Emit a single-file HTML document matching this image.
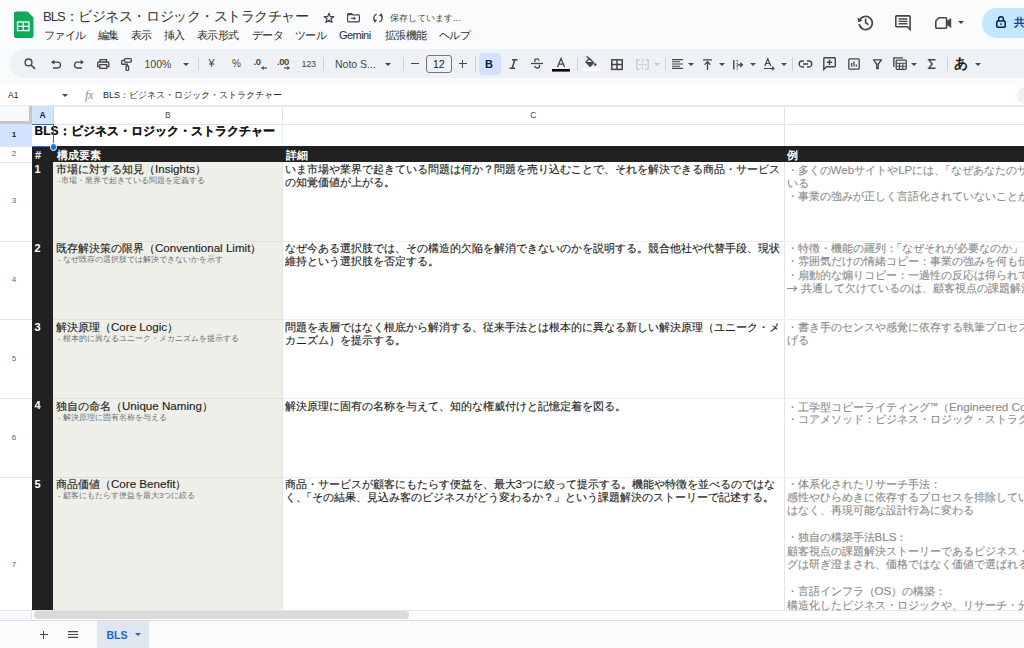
<!DOCTYPE html>
<html><head><meta charset="utf-8">
<style>
*{box-sizing:border-box;margin:0;padding:0}
html,body{width:1024px;height:648px;overflow:hidden}
body{position:relative;background:#f9fbfd;font-family:"Liberation Sans",sans-serif;color:#1f1f1f}
.a{position:absolute;white-space:nowrap}
svg{position:absolute;overflow:visible}
.ic{fill:none;stroke:#444746;stroke-width:1.5}
.menu{top:28.7px;font-size:11px;line-height:12px;color:#2a2a2a;letter-spacing:-0.55px}
.tb{font-size:10.5px;line-height:12px;color:#444746}
.sep{position:absolute;top:56.5px;width:1px;height:14px;background:#cdd0d5}
.rh{position:absolute;left:-2px;width:32px;font-size:8px;line-height:10px;text-align:center;color:#5f6368}
.hl{position:absolute;height:1px;background:#e2e2e2}
.vl{position:absolute;width:1px;background:#e2e2e2}
.t{position:absolute;white-space:nowrap;font-size:11px;line-height:13px;color:#1f1f1f;-webkit-text-stroke:0.15px #1f1f1f}
.d{position:absolute;white-space:nowrap;font-size:11px;line-height:13px;color:#8b8b8b;-webkit-text-stroke:0.12px #8b8b8b}
.s{position:absolute;white-space:nowrap;font-size:8px;line-height:9px;color:#6f6f6f;margin-top:0px}
.L{font-size:11.6px;line-height:1px}
.n{position:absolute;left:34.5px;font-size:11px;line-height:14px;margin-top:-1.2px;font-weight:bold;color:#fff}
</style></head><body>

<!-- ===== title bar ===== -->
<svg style="left:14px;top:11px" width="20" height="27" viewBox="0 0 20 27">
 <path d="M2 0.5H13.5L19.5 6.5V25A2 2 0 0 1 17.5 27H2A2 2 0 0 1 0 25V2.5A2 2 0 0 1 2 0.5Z" fill="#0fa958"/>
 <rect x="3.5" y="11" width="11.5" height="8.6" fill="none" stroke="#fff" stroke-width="1.3"/>
 <path d="M3.5 15.3H15M9.25 11V19.6" stroke="#fff" stroke-width="1.3"/>
</svg>
<div class="a" style="left:43px;top:8px;font-size:14px;line-height:16px;color:#333;letter-spacing:-0.48px"><span style="letter-spacing:-0.9px;font-size:13px">BLS</span>：ビジネス・ロジック・ストラクチャー</div>

<!-- star -->
<svg style="left:322.5px;top:12px" width="12" height="11.5" viewBox="0 0 12 11.5">
 <path d="M6 1.2L7.3 4.6H10.9L8 6.8L9.1 10.4L6 8.2L2.9 10.4L4 6.8L1.1 4.6H4.7Z" fill="none" stroke="#444746" stroke-width="1.2" stroke-linejoin="round"/>
</svg>
<!-- folder -->
<svg style="left:347px;top:13px" width="13" height="9.5" viewBox="0 0 13 9.5">
 <path d="M1.4 0.7H4.6L5.8 1.9H11.6A0.8 0.8 0 0 1 12.4 2.7V8.1A0.8 0.8 0 0 1 11.6 8.9H1.4A0.8 0.8 0 0 1 0.6 8.1V1.5A0.8 0.8 0 0 1 1.4 0.7Z" fill="none" stroke="#444746" stroke-width="1.2"/>
 <path d="M0.8 1H4.6L5.6 2.2H0.8Z" fill="#444746"/>
 <path d="M4 5.3H7.6" stroke="#444746" stroke-width="1.2"/>
 <path d="M6.8 3.4L9 5.3L6.8 7.2Z" fill="#444746"/>
</svg>
<!-- sync -->
<svg style="left:372.5px;top:12.5px" width="10" height="10" viewBox="0 0 10 10">
 <path d="M3.6 1.2A4 4 0 0 0 2.6 8.4" fill="none" stroke="#444746" stroke-width="1.4"/>
 <path d="M6.4 8.8A4 4 0 0 0 7.4 1.6" fill="none" stroke="#444746" stroke-width="1.4"/>
 <path d="M0.3 6.6L4.2 6.9L1.6 9.9Z" fill="#444746"/>
 <path d="M9.7 3.4L5.8 3.1L8.4 0.1Z" fill="#444746"/>
</svg>
<div class="a" style="left:390px;top:13px;font-size:9px;line-height:11px;color:#444746">保存しています...</div>

<!-- menu -->
<div class="a menu" style="left:44px">ファイル</div>
<div class="a menu" style="left:98px">編集</div>
<div class="a menu" style="left:131px">表示</div>
<div class="a menu" style="left:164px">挿入</div>
<div class="a menu" style="left:197px">表示形式</div>
<div class="a menu" style="left:252px">データ</div>
<div class="a menu" style="left:295px">ツール</div>
<div class="a menu" style="left:339px">Gemini</div>
<div class="a menu" style="left:385px">拡張機能</div>
<div class="a menu" style="left:439px">ヘルプ</div>

<!-- right icons -->
<svg style="left:857px;top:14px" width="17" height="17" viewBox="0 0 17 17">
 <path d="M2.6 6.5A6.6 6.6 0 1 1 2.2 10" fill="none" stroke="#444746" stroke-width="1.7"/>
 <path d="M0.5 3.5L1.2 8.2L5.5 6.8Z" fill="#444746"/>
 <path d="M8.6 4.6V8.8L11.6 10.6" fill="none" stroke="#444746" stroke-width="1.6"/>
</svg>
<svg style="left:895px;top:15px" width="16" height="16" viewBox="0 0 16 16">
 <path d="M1.7 0.9H14.2A0.9 0.9 0 0 1 15.1 1.8V14.6L12.3 11.8H1.7A0.9 0.9 0 0 1 0.8 10.9V1.8A0.9 0.9 0 0 1 1.7 0.9Z" fill="none" stroke="#444746" stroke-width="1.6"/>
 <path d="M3.5 4H12.4M3.5 6.4H12.4M3.5 8.8H12.4" stroke="#444746" stroke-width="1.4"/>
</svg>
<svg style="left:935px;top:17px" width="17" height="12" viewBox="0 0 17 12">
 <path d="M4 0.8H10.6A1 1 0 0 1 11.6 1.8V10.2A1 1 0 0 1 10.6 11.2H1.8A1 1 0 0 1 0.8 10.2V4Z" fill="none" stroke="#444746" stroke-width="1.6"/>
 <path d="M11.6 4.3L16.2 1V11L11.6 7.7Z" fill="#444746"/>
</svg>
<svg style="left:958px;top:21px" width="6" height="3" viewBox="0 0 6 3"><path d="M0 0H6L3 3Z" fill="#444746"/></svg>
<div class="a" style="left:982px;top:7.5px;width:80px;height:30px;border-radius:15px;background:#c2e7ff"></div>
<svg style="left:996px;top:16px" width="10" height="12" viewBox="0 0 10 12">
 <rect x="0.8" y="5" width="8.4" height="6.2" rx="1" fill="none" stroke="#041e49" stroke-width="1.5"/>
 <path d="M2.6 5V3.2A2.4 2.4 0 0 1 7.4 3.2V5" fill="none" stroke="#041e49" stroke-width="1.5"/>
 <circle cx="5" cy="8.1" r="0.9" fill="#041e49"/>
</svg>
<div class="a" style="left:1014px;top:16px;font-size:11px;line-height:12px;color:#16408a;font-weight:bold">共有</div>

<!-- ===== toolbar ===== -->
<div class="a" style="left:10px;top:48.5px;width:1030px;height:29.5px;border-radius:15px;background:#eef2f7"></div>

<!-- search -->
<svg style="left:23.5px;top:57.5px" width="12" height="11" viewBox="0 0 12 11">
 <circle cx="4.5" cy="4.4" r="3.4" fill="none" stroke="#444746" stroke-width="1.4"/>
 <path d="M7 7L11 10.9" stroke="#444746" stroke-width="1.5"/>
</svg>
<!-- undo -->
<svg style="left:50.5px;top:60.2px" width="11" height="9" viewBox="0 0 11 9">
 <path d="M0 2.2L3.4 -0.2V4.6Z" fill="#444746"/>
 <path d="M3 2.2H6.6A2.9 2.9 0 0 1 6.6 8H2" fill="none" stroke="#444746" stroke-width="1.3"/>
</svg>
<!-- redo -->
<svg style="left:73.5px;top:60.2px" width="11" height="9" viewBox="0 0 11 9">
 <path d="M10 2.2L6.6 -0.2V4.6Z" fill="#444746"/>
 <path d="M7 2.2H3.4A2.9 2.9 0 0 0 3.4 8H8" fill="none" stroke="#444746" stroke-width="1.3"/>
</svg>
<!-- print -->
<svg style="left:96.5px;top:59px" width="12.5" height="10" viewBox="0 0 12.5 10">
 <path d="M3 3V0.65H9.5V3" fill="none" stroke="#444746" stroke-width="1.3"/>
 <path d="M2.8 7.6H0.65V4.3A1.3 1.3 0 0 1 1.95 3H10.55A1.3 1.3 0 0 1 11.85 4.3V7.6H9.7" fill="none" stroke="#444746" stroke-width="1.3"/>
 <rect x="2.8" y="5.6" width="6.9" height="3.75" fill="none" stroke="#444746" stroke-width="1.3"/>
</svg>
<!-- paint format -->
<svg style="left:120.5px;top:58px" width="11" height="13" viewBox="0 0 11 13">
 <rect x="3.5" y="0.65" width="6.8" height="3.5" rx="1" fill="none" stroke="#444746" stroke-width="1.3"/>
 <path d="M3.5 2.4H1.5A0.85 0.85 0 0 0 0.65 3.25V5.4A0.85 0.85 0 0 0 1.5 6.25H6.3V8" fill="none" stroke="#444746" stroke-width="1.3"/>
 <rect x="5" y="8" width="2.6" height="4.4" rx="0.7" fill="none" stroke="#444746" stroke-width="1.3"/>
</svg>
<div class="a tb" style="left:144.5px;top:58px;font-size:10.5px;color:#444746">100%</div>
<svg style="left:183px;top:62.5px" width="6" height="3" viewBox="0 0 6 3"><path d="M0 0H6L3 3Z" fill="#444746"/></svg>
<div class="sep" style="left:198px"></div>
<div class="a tb" style="left:208.5px;top:57px;font-size:11px;line-height:13px">¥</div>
<div class="a tb" style="left:232px;top:58px;font-size:10px">%</div>
<div class="a tb" style="left:253.5px;top:55.5px;font-size:9.5px;font-weight:bold;letter-spacing:-0.5px">.0</div>
<svg style="left:260.5px;top:66px" width="6" height="4" viewBox="0 0 6 4"><path d="M6 2H2" stroke="#444746" stroke-width="1.2"/><path d="M0 2L2.6 0V4Z" fill="#444746"/></svg>
<div class="a tb" style="left:277px;top:55.5px;font-size:9.5px;font-weight:bold;letter-spacing:-0.5px">.00</div>
<svg style="left:284px;top:66px" width="6" height="4" viewBox="0 0 6 4"><path d="M0 2H4" stroke="#444746" stroke-width="1.2"/><path d="M6 2L3.4 0V4Z" fill="#444746"/></svg>
<div class="a tb" style="left:301.5px;top:57.5px;font-size:9px;letter-spacing:-0.3px">123</div>
<div class="sep" style="left:323px"></div>
<div class="a tb" style="left:335px;top:57.5px;font-size:10.5px;color:#444746">Noto S...</div>
<svg style="left:385px;top:62.5px" width="6" height="3" viewBox="0 0 6 3"><path d="M0 0H6L3 3Z" fill="#444746"/></svg>
<div class="sep" style="left:402.5px"></div>
<div class="a" style="left:410.5px;top:63px;width:8px;height:1.4px;background:#444746"></div>
<div class="a" style="left:426px;top:54.5px;width:25.5px;height:18.5px;border:1px solid #747775;border-radius:3px;font-size:10.5px;line-height:16.5px;text-align:center;color:#1f1f1f">12</div>
<div class="a" style="left:458.5px;top:63px;width:8px;height:1.4px;background:#444746"></div>
<div class="a" style="left:461.8px;top:59.7px;width:1.4px;height:8px;background:#444746"></div>
<div class="sep" style="left:475px"></div>
<div class="a" style="left:479px;top:53px;width:21.5px;height:21.5px;border-radius:4px;background:#d3e3fd"></div>
<div class="a" style="left:485px;top:57.5px;font-size:11px;line-height:12px;font-weight:bold;color:#041e49">B</div>
<!-- italic -->
<svg style="left:509px;top:58.5px" width="9" height="10" viewBox="0 0 9 10">
 <path d="M3 0.8H8.5M0.5 9.2H6M5.8 0.8L3.2 9.2" fill="none" stroke="#444746" stroke-width="1.5"/>
</svg>
<!-- strikethrough -->
<svg style="left:531px;top:58px" width="12" height="11" viewBox="0 0 12 11">
 <path d="M0 5.5H12" stroke="#444746" stroke-width="1.3"/>
 <path d="M8.3 2.5C7.8 1.3 6.9 0.9 6 0.9C4.6 0.9 3.7 1.7 3.7 2.6C3.7 3.2 4 3.7 4.4 4" fill="none" stroke="#444746" stroke-width="1.3"/>
 <path d="M3.6 8C4 9.3 5 10 6.1 10C7.6 10 8.5 9.2 8.5 8.2C8.5 7.7 8.3 7.3 8 7" fill="none" stroke="#444746" stroke-width="1.3"/>
</svg>
<!-- text color -->
<svg style="left:552px;top:56.5px" width="18" height="15" viewBox="0 0 18 15">
 <path d="M5.5 10L9 1.5L12.5 10M6.7 7.2H11.3" fill="none" stroke="#444746" stroke-width="1.3"/>
 <rect x="0" y="12" width="18" height="2.6" fill="#000"/>
</svg>
<div class="sep" style="left:576.5px"></div>
<!-- fill color -->
<svg style="left:583px;top:55px" width="18" height="16" viewBox="0 0 18 16">
 <path d="M3.6 1.2L6.4 4" stroke="#444746" stroke-width="1.3"/>
 <path d="M6.5 3.6L10.6 7.7L7.1 11.2L3 7.1Z" fill="none" stroke="#444746" stroke-width="1.4" stroke-linejoin="round"/>
 <path d="M3 7.1H10.2L7.1 11.2Z" fill="#444746"/>
 <circle cx="12.2" cy="9.6" r="1.3" fill="#444746"/>
 <rect x="0" y="12.8" width="17.3" height="3.2" fill="#fff"/>
</svg>
<!-- borders -->
<svg style="left:610.5px;top:58.5px" width="12" height="11" viewBox="0 0 12 11">
 <rect x="0.8" y="0.8" width="10.4" height="9.6" fill="none" stroke="#444746" stroke-width="1.5"/>
 <path d="M6 0.8V10.4M0.8 5.6H11.2" stroke="#444746" stroke-width="1.5"/>
</svg>
<!-- merge (disabled) -->
<svg style="left:635.5px;top:58.5px" width="13" height="11" viewBox="0 0 13 11">
 <path d="M3.5 0.8H0.8V10.2H3.5M9.5 0.8H12.2V10.2H9.5M6.5 0.5V3M6.5 4.5V6.5M6.5 8V10.5M2.5 5.5H5M8 5.5H10.5" fill="none" stroke="#c4c7c5" stroke-width="1.2"/>
</svg>
<svg style="left:654px;top:62.5px" width="6" height="3" viewBox="0 0 6 3"><path d="M0 0H6L3 3Z" fill="#c4c7c5"/></svg>
<div class="sep" style="left:664.5px"></div>
<!-- align left -->
<svg style="left:671.5px;top:58.5px" width="11" height="11" viewBox="0 0 11 11">
 <path d="M0 0.6H11M0 2.8H8M0 5H11M0 7.2H8M0 9.4H11" stroke="#444746" stroke-width="1.1"/>
</svg>
<svg style="left:688px;top:62.5px" width="6" height="3" viewBox="0 0 6 3"><path d="M0 0H6L3 3Z" fill="#444746"/></svg>
<!-- valign top -->
<svg style="left:703px;top:58.5px" width="9" height="11" viewBox="0 0 9 11">
 <path d="M0 0.8H9M4.5 3V11M1.6 5.6L4.5 2.7L7.4 5.6" fill="none" stroke="#444746" stroke-width="1.3"/>
</svg>
<svg style="left:719px;top:62.5px" width="6" height="3" viewBox="0 0 6 3"><path d="M0 0H6L3 3Z" fill="#444746"/></svg>
<!-- wrap/overflow -->
<svg style="left:733px;top:59.5px" width="10" height="10" viewBox="0 0 10 10">
 <path d="M0.8 0V9.5" stroke="#444746" stroke-width="1.4"/>
 <path d="M4.2 0V9.5" stroke="#444746" stroke-width="1.1" stroke-dasharray="1.6 1.2"/>
 <path d="M4.5 4.8H9.3M7.2 2.6L9.4 4.8L7.2 7" fill="none" stroke="#444746" stroke-width="1.3"/>
</svg>
<svg style="left:749.5px;top:62.5px" width="6" height="3" viewBox="0 0 6 3"><path d="M0 0H6L3 3Z" fill="#444746"/></svg>
<!-- rotate -->
<svg style="left:764px;top:58px" width="11" height="12" viewBox="0 0 11 12">
 <path d="M0.8 8L3.8 0.8L6.8 8M1.9 5.5H5.7M0 10.5H10M8 8.8L10 10.5L8 12" fill="none" stroke="#444746" stroke-width="1.2"/>
</svg>
<svg style="left:780.5px;top:62.5px" width="6" height="3" viewBox="0 0 6 3"><path d="M0 0H6L3 3Z" fill="#444746"/></svg>
<div class="sep" style="left:791.5px"></div>
<!-- link -->
<svg style="left:799px;top:59.5px" width="13" height="8" viewBox="0 0 13 8">
 <path d="M5 1H3.2A3 3 0 0 0 3.2 7H5M8 1H9.8A3 3 0 0 1 9.8 7H8M4 4H9" fill="none" stroke="#444746" stroke-width="1.4"/>
</svg>
<!-- comment add -->
<svg style="left:823px;top:57px" width="13" height="13" viewBox="0 0 13 13">
 <path d="M1.5 0.8H11.5A0.8 0.8 0 0 1 12.3 1.6V9A0.8 0.8 0 0 1 11.5 9.8H3.5L0.8 12.4V1.6A0.8 0.8 0 0 1 1.5 0.8Z" fill="none" stroke="#444746" stroke-width="1.4"/>
 <path d="M6.5 2.6V8M3.8 5.3H9.2" stroke="#444746" stroke-width="1.4"/>
</svg>
<!-- chart -->
<svg style="left:847.5px;top:57.5px" width="12" height="12" viewBox="0 0 12 12">
 <rect x="0.8" y="0.8" width="10.4" height="10.4" rx="1" fill="none" stroke="#444746" stroke-width="1.3"/>
 <path d="M3.6 5V8.6M6 3.4V8.6M8.4 6.6V8.6" stroke="#444746" stroke-width="1.3"/>
</svg>
<!-- filter -->
<svg style="left:873px;top:58.5px" width="9" height="10" viewBox="0 0 9 10">
 <path d="M0.5 0.8H8.5L5.3 5V9.5H3.7V5Z" fill="none" stroke="#444746" stroke-width="1.3" stroke-linejoin="round"/>
</svg>
<!-- table -->
<svg style="left:892.5px;top:57px" width="14" height="13" viewBox="0 0 14 13">
 <path d="M0.8 10V0.8H10" fill="none" stroke="#444746" stroke-width="1.3"/>
 <rect x="3.2" y="3.2" width="10" height="9.2" rx="0.8" fill="none" stroke="#444746" stroke-width="1.3"/>
 <path d="M3.2 6.2H13.2M3.2 9.2H13.2M6.5 6.2V12.4M9.8 6.2V12.4" stroke="#444746" stroke-width="1.1"/>
</svg>
<svg style="left:911px;top:62.5px" width="6" height="3" viewBox="0 0 6 3"><path d="M0 0H6L3 3Z" fill="#444746"/></svg>
<!-- sigma -->
<svg style="left:927.5px;top:58.5px" width="8" height="10" viewBox="0 0 8 10">
 <path d="M7.5 0.8H0.8L4.2 5L0.8 9.2H7.5" fill="none" stroke="#444746" stroke-width="1.4"/>
</svg>
<div class="sep" style="left:946.5px"></div>
<div class="a" style="left:954px;top:56px;font-size:13.5px;line-height:16px;color:#1f1f1f;font-weight:bold">あ</div>
<svg style="left:975px;top:62.5px" width="6" height="3" viewBox="0 0 6 3"><path d="M0 0H6L3 3Z" fill="#444746"/></svg>


<!-- ===== formula bar ===== -->
<div class="a" style="left:0;top:84.6px;width:1024px;height:21.4px;background:#fff"></div>
<div class="a" style="left:8px;top:89.5px;font-size:8.5px;line-height:11px;color:#1f1f1f">A1</div>
<svg style="left:61.5px;top:94px" width="6" height="3" viewBox="0 0 6 3"><path d="M0 0H6L3 3Z" fill="#444746"/></svg>
<div class="a" style="left:85px;top:88px;font-size:12.5px;line-height:14px;color:#8f9296;font-style:italic;font-family:'Liberation Serif',serif;letter-spacing:-0.5px">fx</div>
<div class="a" style="left:103px;top:89px;font-size:9px;line-height:12px;color:#1f1f1f">BLS：ビジネス・ロジック・ストラクチャー</div>
<div class="a" style="left:1017px;top:87.3px;width:30px;height:16.6px;border-radius:8.3px;background:#eef1f5"></div>

<!-- ===== grid ===== -->
<!-- grid background -->
<div class="a" style="left:0;top:106px;width:1024px;height:505px;background:#fff"></div>
<!-- header top line -->
<div class="hl" style="left:0;top:104.8px;height:1.9px;width:1024px;background:#e9e9e9"></div>
<div class="hl" style="left:0;top:123.5px;width:1024px;background:#e3e3e3"></div>
<!-- corner -->
<div class="a" style="left:0;top:106px;width:32px;height:18px;background:#f8f9fa;border-right:3px solid #c4c7c5;border-bottom:3px solid #c4c7c5"></div>
<!-- column headers -->
<div class="a" style="left:32px;top:106px;width:21px;height:18px;background:#d3e3fd"></div>
<div class="a" style="left:32px;top:106px;width:21px;font-size:8.5px;line-height:18px;text-align:center;color:#041e49;font-weight:bold">A</div>
<div class="a" style="left:53px;top:106px;width:229.5px;font-size:8.5px;line-height:18px;text-align:center;color:#444746">B</div>
<div class="a" style="left:282.5px;top:106px;width:501.5px;font-size:8.5px;line-height:18px;text-align:center;color:#444746">C</div>
<div class="vl" style="left:282px;top:106px;height:18px;background:#e3e3e3"></div>
<div class="vl" style="left:784px;top:106px;height:18px;background:#e3e3e3"></div>
<div class="vl" style="left:53px;top:106px;height:18px;background:#c8d6ec"></div>

<!-- row header backgrounds -->
<div class="a" style="left:0;top:124px;width:32px;height:22px;background:#d3e3fd"></div>
<div class="rh" style="top:130px;color:#041e49;font-weight:bold">1</div>
<div class="rh" style="top:149px">2</div>
<div class="rh" style="top:196px">3</div>
<div class="rh" style="top:275px">4</div>
<div class="rh" style="top:353.5px">5</div>
<div class="rh" style="top:432.5px">6</div>
<div class="rh" style="top:559.5px">7</div>
<!-- row header lines -->
<div class="hl" style="left:0;top:145.5px;width:32px;background:#e3e3e3"></div>
<div class="hl" style="left:0;top:161.5px;width:32px"></div>
<div class="hl" style="left:0;top:240.5px;width:32px"></div>
<div class="hl" style="left:0;top:319px;width:32px"></div>
<div class="hl" style="left:0;top:398px;width:32px"></div>
<div class="hl" style="left:0;top:476.5px;width:32px"></div>
<div class="hl" style="left:0;top:610px;width:32px"></div>

<!-- row 1 -->
<div class="vl" style="left:282px;top:124px;height:22px;background:#e8eef8"></div>
<div class="vl" style="left:784px;top:124px;height:22px;background:#e3e3e3"></div>
<div class="t" style="left:34.5px;top:124px;font-size:12px;line-height:15px;font-weight:bold;color:#000">BLS：ビジネス・ロジック・ストラクチャー</div>

<!-- row 2 dark header -->
<div class="a" style="left:32px;top:146px;width:1000px;height:16px;background:#212121"></div>
<div class="a" style="left:35px;top:148px;font-size:11px;line-height:14px;font-weight:bold;color:#fff">#</div>
<div class="a" style="left:57px;top:148px;font-size:11px;line-height:14px;font-weight:bold;color:#fff">構成要素</div>
<div class="a" style="left:286px;top:148px;font-size:11px;line-height:14px;font-weight:bold;color:#fff">詳細</div>
<div class="a" style="left:787px;top:148px;font-size:11px;line-height:14px;font-weight:bold;color:#fff">例</div>

<!-- col A dark, col B grey -->
<div class="a" style="left:32px;top:162px;width:21px;height:449px;background:#212121"></div>
<div class="a" style="left:53px;top:162px;width:229px;height:449px;background:#efefea"></div>
<!-- column lines -->
<div class="vl" style="left:282px;top:162px;height:449px;background:#e4e4e4"></div>
<div class="vl" style="left:784px;top:162px;height:449px;background:#e4e4e4"></div>
<!-- row lines -->
<div class="hl" style="left:53px;top:240.5px;width:229px;background:#e2e2dd"></div>
<div class="hl" style="left:53px;top:319px;width:229px;background:#e2e2dd"></div>
<div class="hl" style="left:53px;top:398px;width:229px;background:#e2e2dd"></div>
<div class="hl" style="left:53px;top:476.5px;width:229px;background:#e2e2dd"></div>
<div class="hl" style="left:283px;top:240.5px;width:741px;background:#eeeeee"></div>
<div class="hl" style="left:283px;top:319px;width:741px;background:#eeeeee"></div>
<div class="hl" style="left:283px;top:398px;width:741px;background:#eeeeee"></div>
<div class="hl" style="left:283px;top:476.5px;width:741px;background:#eeeeee"></div>
<div class="hl" style="left:0;top:610px;width:1024px;height:1.5px;background:#e6e6e6"></div>

<!-- numbers -->
<div class="n" style="top:163px">1</div>
<div class="n" style="top:242px">2</div>
<div class="n" style="top:321px">3</div>
<div class="n" style="top:399.5px">4</div>
<div class="n" style="top:478px">5</div>

<!-- col B -->
<div class="t" style="left:56px;top:163px">市場に対する知見（<span class="L">Insights</span>）</div>
<div class="s" style="left:58px;top:176px">-市場・業界で起きている問題を定義する</div>
<div class="t" style="left:56px;top:242px">既存解決策の限界（<span class="L">Conventional Limit</span>）</div>
<div class="s" style="left:58px;top:255px">- なぜ既存の選択肢では解決できないかを示す</div>
<div class="t" style="left:56px;top:321px">解決原理（<span class="L">Core Logic</span>）</div>
<div class="s" style="left:58px;top:334px">- 根本的に異なるユニーク・メカニズムを提示する</div>
<div class="t" style="left:56px;top:399.5px">独自の命名（<span class="L">Unique Naming</span>）</div>
<div class="s" style="left:58px;top:412.5px">- 解決原理に固有名称を与える</div>
<div class="t" style="left:56px;top:478px">商品価値（<span class="L">Core Benefit</span>）</div>
<div class="s" style="left:58px;top:491px">- 顧客にもたらす便益を最大3つに絞る</div>

<!-- col C -->
<div class="t" style="left:284.5px;top:163px">いま市場や業界で起きている問題は何か？問題を売り込むことで、それを解決できる商品・サービス<br>の知覚価値が上がる。</div>
<div class="t" style="left:284.5px;top:242px">なぜ今ある選択肢では、その構造的欠陥を解消できないのかを説明する。競合他社や代替手段、現状<br>維持という選択肢を否定する。</div>
<div class="t" style="left:284.5px;top:321px">問題を表層ではなく根底から解消する、従来手法とは根本的に異なる新しい解決原理（ユニーク・メ<br>カニズム）を提示する。</div>
<div class="t" style="left:284.5px;top:399.5px">解決原理に固有の名称を与えて、知的な権威付けと記憶定着を図る。</div>
<div class="t" style="left:284.5px;top:478px">商品・サービスが顧客にもたらす便益を、最大<span class="L">3</span>つに絞って提示する。機能や特徴を並べるのではな<br>く<span style="letter-spacing:-5.5px">、</span>「その結果、見込み客のビジネスがどう変わるか？」という課題解決のストーリーで記述する。</div>

<!-- col D -->
<div class="d" style="left:786.5px;top:163.8px;line-height:13.2px">・多くの<span class="L">Web</span>サイトや<span class="L">LP</span>には<span style="letter-spacing:-5.5px">、</span>「なぜあなたのサービスが<br>いる<br>・事業の強みが正しく言語化されていないことが</div>
<div class="d" style="left:786.5px;top:242px;line-height:13.45px">・特徴・機能の羅列<span style="letter-spacing:-5.5px">：</span>「なぜそれが必要なのか」<br>・雰囲気だけの情緒コピー：事業の強みを何も伝えない<br>・扇動的な煽りコピー：一過性の反応は得られても<br><span style="position:relative;color:transparent">→<svg style="left:0.5px;top:3px" width="10.5" height="7" viewBox="0 0 10.5 7"><path d="M0 3.5H9" stroke="#8b8b8b" stroke-width="1.1"/><path d="M6.6 0.8L9.6 3.5L6.6 6.2" fill="none" stroke="#8b8b8b" stroke-width="1.1"/></svg></span> 共通して欠けているのは、顧客視点の課題解決</div>
<div class="d" style="left:786.5px;top:321px">・書き手のセンスや感覚に依存する執筆プロセスを<br>げる</div>
<div class="d" style="left:786.5px;top:399.5px">・工学型コピーライティング<span style="font-size:8.5px;vertical-align:1.5px">™</span>（<span class="L">Engineered Copywriting</span>）<br>・コアメソッド：ビジネス・ロジック・ストラクチャー</div>
<div class="d" style="left:786.5px;top:477.5px;line-height:13.45px">・体系化されたリサーチ手法：<br>感性やひらめきに依存するプロセスを排除している<br>はなく、再現可能な設計行為に変わる<br><br>・独自の構築手法<span class="L">BLS</span>：<br>顧客視点の課題解決ストーリーであるビジネス・ロジック<br>グは研ぎ澄まされ、価格ではなく価値で選ばれる<br><br>・言語インフラ（<span class="L">OS</span>）の構築：<br>構造化したビジネス・ロジックや、リサーチ・分析</div>

<!-- selection A1 -->
<div class="a" style="left:32px;top:123.5px;width:21.5px;height:23px;border:1.5px solid #1a73e8;border-left:none"></div>
<div class="a" style="left:49.7px;top:143.2px;width:7.5px;height:7.5px;border-radius:50%;background:#1a73e8;border:1px solid #fff"></div>

<!-- scrollbar row -->
<div class="a" style="left:0;top:610.5px;width:32px;height:10px;background:#f8f9fa;border-right:1px solid #e3e3e3"></div>
<div class="a" style="left:32px;top:611px;width:992px;height:9.5px;background:#fff"></div>
<div class="a" style="left:34px;top:611.2px;width:375px;height:7.8px;border-radius:3.9px;background:#dadada"></div>


<!-- ===== bottom ===== -->
<div class="a" style="left:0;top:620px;width:1024px;height:28px;background:#f9fbfd;border-top:1px solid #dadce0"></div>
<div class="a" style="left:40px;top:634px;width:7.5px;height:1.4px;background:#444746"></div>
<div class="a" style="left:43px;top:630.8px;width:1.4px;height:7.8px;background:#444746"></div>
<svg style="left:68px;top:631px" width="10" height="7" viewBox="0 0 10 7"><path d="M0 0.7H10M0 3.5H10M0 6.3H10" stroke="#444746" stroke-width="1.2"/></svg>
<div class="a" style="left:97px;top:621px;width:52px;height:27px;background:#e0e6ee"></div>
<div class="a" style="left:106.5px;top:628.5px;font-size:10.5px;line-height:12px;font-weight:bold;color:#1b66d2">BLS</div>
<svg style="left:134.5px;top:633px" width="6" height="3" viewBox="0 0 6 3"><path d="M0 0H6L3 3Z" fill="#1b66d2"/></svg>
</body></html>
